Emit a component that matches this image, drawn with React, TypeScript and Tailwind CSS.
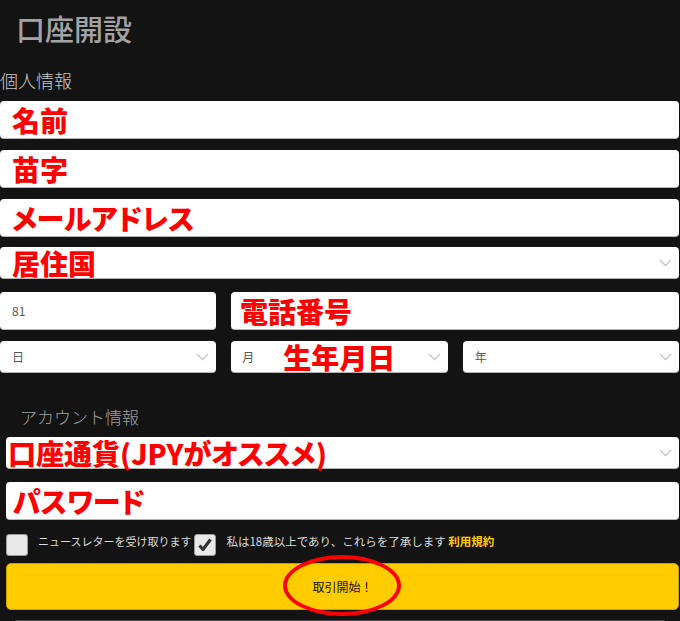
import type { ReactNode } from "react";

const ANNOT =
	"font-['Noto_Sans_CJK_JP',sans-serif] text-[28px] font-black leading-none text-[#ff0000] [font-feature-settings:'palt']";

function Chevron() {
	return (
		<svg
			aria-hidden="true"
			className="absolute right-[7px] top-1/2 -translate-y-1/2"
			width="13"
			height="8"
			viewBox="0 0 13 8"
		>
			<polyline
				points="1,1 6.5,6.5 12,1"
				fill="none"
				stroke="#c4c4c4"
				strokeWidth="1.3"
			/>
		</svg>
	);
}

function TextField({
	children,
	className = "",
}: {
	children?: ReactNode;
	className?: string;
}) {
	return (
		<div
			className={`flex h-[38px] items-center rounded-[4px] border-b border-[#b5b5b5] bg-white ${className}`}
		>
			{children}
		</div>
	);
}

function SelectField({
	children,
	className = "",
}: {
	children?: ReactNode;
	className?: string;
}) {
	return (
		<div
			className={`relative flex h-[32px] items-center rounded-[4px] border-b border-[#b5b5b5] bg-white ${className}`}
		>
			{children}
			<Chevron />
		</div>
	);
}

function Checkbox({ checked = false }: { checked?: boolean }) {
	return (
		<div className="flex size-[22px] shrink-0 items-center justify-center rounded-[3px] border border-[#9a9a9a] bg-[#e9e9e9]">
			{checked && (
				<svg aria-hidden="true" width="16" height="16" viewBox="0 0 16 16">
					<path
						d="M2.5 8.5 L6 12.5 L13.5 2.5"
						fill="none"
						stroke="#333"
						strokeWidth="3.2"
						strokeLinejoin="round"
					/>
				</svg>
			)}
		</div>
	);
}

export default function App() {
	return (
		<div className="relative h-[621px] w-[680px] overflow-hidden bg-[#131313] pr-[1px] font-['Noto_Sans_CJK_JP',sans-serif]">
			<h1 className="flex h-[54px] items-center pl-[16px] pt-[4px] text-[29px] font-medium text-[#a3a3a3]">
				口座開設
			</h1>
			<p className="h-[47px] pt-[13px] text-[18px] font-light leading-[26px] text-[#c8c8c8]">
				個人情報
			</p>

			<div className="flex flex-col">
				<TextField className="pl-[12px]">
					<span className={ANNOT}>名前</span>
				</TextField>
				<TextField className="mt-[11px] pl-[12px]">
					<span className={ANNOT}>苗字</span>
				</TextField>
				<TextField className="mt-[11px] pl-[12px]">
					<span className={ANNOT}>メールアドレス</span>
				</TextField>
				<SelectField className="mt-[10px] pl-[12px]">
					<span className={ANNOT}>居住国</span>
				</SelectField>

				<div className="mt-[13px] grid grid-cols-[216px_1fr] gap-[15px]">
					<TextField className="pl-[12px] text-[12px] text-[#555]">81</TextField>
					<TextField className="pl-[9px]">
						<span className={ANNOT}>電話番号</span>
					</TextField>
				</div>

				<div className="mt-[11px] grid grid-cols-3 gap-[15px]">
					<SelectField className="pl-[12px] text-[12px] text-[#555]">
						日
					</SelectField>
					<SelectField className="pl-[11px] text-[12px] text-[#555]">
						<span>月</span>
						<span className={`ml-[29px] ${ANNOT}`}>生年月日</span>
					</SelectField>
					<SelectField className="pl-[12px] text-[12px] text-[#555]">
						年
					</SelectField>
				</div>
			</div>

			<p className="h-[64px] pl-[20px] pt-[30px] text-[17px] font-light leading-[27px] text-[#a0a0a0]">
				アカウント情報
			</p>

			<div className="ml-[6px] flex flex-col">
				<SelectField className="h-[31px] pl-[2px]">
					<span className={ANNOT}>口座通貨(JPYがオススメ)</span>
				</SelectField>
				<TextField className="mt-[13px] pl-[7px]">
					<span className={ANNOT}>パスワード</span>
				</TextField>

				<div className="mt-[14px] flex h-[23px] items-start">
					<Checkbox />
					<span className="ml-[10px] text-[11px] leading-[14px] text-[#dcdcdc]">
						ニュースレターを受け取ります
					</span>
					<div className="ml-[3px]">
						<Checkbox checked />
					</div>
					<span className="ml-[10px] text-[11.5px] leading-[14px] text-[#dcdcdc]">
						私は18歳以上であり、これらを了承します{" "}
						<span className="font-bold text-[#ffcc00]">利用規約</span>
					</span>
				</div>

				<button
					type="button"
					className="mt-[6px] flex h-[47px] items-center justify-center rounded-[5px] border border-[#c99f00] bg-[#ffcc00] text-[12px] text-[#111]"
				>
					取引開始！
				</button>
			</div>

			<div className="mx-[14px] mt-[10px] h-[20px] w-[652px] rounded-t-[3px] bg-[#4d4d4d]" />

			<div className="absolute left-[283px] top-[555px] h-[61px] w-[118px] rounded-[50%] border-[4px] border-[#ff0000]" />
		</div>
	);
}
